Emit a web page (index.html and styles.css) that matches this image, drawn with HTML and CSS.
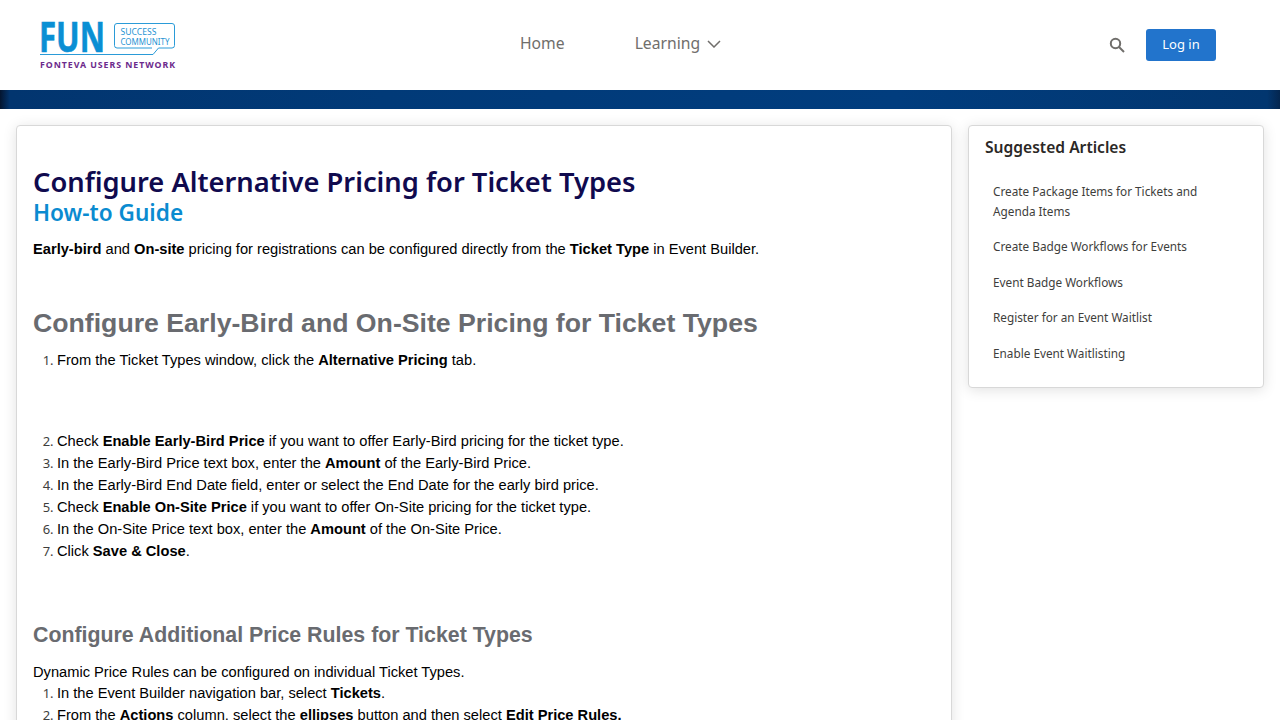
FILE: index.html
```html
<!DOCTYPE html>
<html lang="en">
  <head>
    <meta charset="UTF-8">
    <meta name="viewport" content="width=device-width, initial-scale=1.0">
    <title>Configure Alternative Pricing for Ticket Types</title>
    <link rel="stylesheet" href="styles.css">
  </head>
  <body>
    <header class="site-header">
      <a class="logo" href="#">
        <svg width="136" height="66" viewBox="0 -10 136 66">
          <text class="logo-fun" x="-1" y="29.500" textLength="66" lengthAdjust="spacingAndGlyphs">FUN</text>
          <path class="logo-line" d="M0 32.500H113L118.500 26H132a2.500 2.500 0 0 0 2.500-2.500V4A2.500 2.500 0 0 0 132 1.500H77A2.500 2.500 0 0 0 74.500 4V23.500A2.500 2.500 0 0 0 77 26H112"/>
          <text class="logo-small" x="80.500" y="13" textLength="36" lengthAdjust="spacingAndGlyphs">SUCCESS</text>
          <text class="logo-small" x="80.500" y="23" textLength="49" lengthAdjust="spacingAndGlyphs">COMMUNITY</text>
          <text class="logo-network" x="0" y="46" textLength="135">FONTEVA USERS NETWORK</text>
        </svg>
      </a>
      <nav class="main-nav">
        <a class="nav-link" href="#">Home</a>
        <a class="nav-link" href="#">Learning
          <svg class="chevron" width="14" height="8" viewBox="0 0 14 8"><path d="M1 1l6 6 6-6"/></svg>
        </a>
      </nav>
      <div class="header-actions">
        <svg class="search-icon" width="16" height="16" viewBox="0 0 16 16"><circle cx="6.500" cy="6.500" r="4.700"/><path d="M10 10l5 5"/></svg>
        <a class="login-btn" href="#">Log in</a>
      </div>
    </header>
    <div class="hero-band"></div>

    <main class="page-grid">
      <article class="card article">
        <h1 class="article-title">Configure Alternative Pricing for Ticket Types</h1>
        <h2 class="article-sub">How-to Guide</h2>
        <p class="intro"><b>Early-bird</b> and <b>On-site</b> pricing for registrations can be configured directly from the <b>Ticket Type</b> in Event Builder.</p>

        <h2 class="section-title">Configure Early-Bird and On-Site Pricing for Ticket Types</h2>
        <ol class="steps first-step">
          <li>From the Ticket Types window, click the <b>Alternative Pricing</b> tab.</li>
        </ol>
        <ol class="steps after-gap" start="2">
          <li>Check <b>Enable Early-Bird Price</b> if you want to offer Early-Bird pricing for the ticket type.</li>
          <li>In the Early-Bird Price text box, enter the <b>Amount</b> of the Early-Bird Price.</li>
          <li>In the Early-Bird End Date field, enter or select the End Date for the early bird price.</li>
          <li>Check <b>Enable On-Site Price</b> if you want to offer On-Site pricing for the ticket type.</li>
          <li>In the On-Site Price text box, enter the <b>Amount</b> of the On-Site Price.</li>
          <li>Click <b>Save &amp; Close</b>.</li>
        </ol>

        <h3 class="subsection-title">Configure Additional Price Rules for Ticket Types</h3>
        <p class="rules-intro">Dynamic Price Rules can be configured on individual Ticket Types.</p>
        <ol class="steps">
          <li>In the Event Builder navigation bar, select <b>Tickets</b>.</li>
          <li>From the <b>Actions</b> column, select the <b>ellipses</b> button and then select <b>Edit Price Rules.</b></li>
        </ol>
      </article>

      <aside class="card suggested">
        <h2 class="suggested-title">Suggested Articles</h2>
        <ul class="suggested-list">
          <li><a href="#">Create Package Items for Tickets and Agenda Items</a></li>
          <li><a href="#">Create Badge Workflows for Events</a></li>
          <li><a href="#">Event Badge Workflows</a></li>
          <li><a href="#">Register for an Event Waitlist</a></li>
          <li><a href="#">Enable Event Waitlisting</a></li>
        </ul>
      </aside>
    </main>
  </body>
</html>
```

FILE: styles.css
```css
:root {
  --ui-font: "Noto Sans", "Open Sans", sans-serif;
  --body-font: "Liberation Sans", Arial, sans-serif;
  --grey-heading: #696b70;
  --card-border: #d8d8d8;
}

html, body {
  height: 720px;
  overflow: hidden;
}

body {
  margin: 0;
  background: #fff;
  color: #000;
  font-family: var(--body-font);
}

a {
  color: inherit;
  text-decoration: none;
}

.site-header {
  display: grid;
  grid-template-columns: 480px 1fr auto;
  align-items: center;
  height: 90px;
  padding: 0 64px 0 40px;
  box-sizing: border-box;
}

.logo {
  display: block;
  height: 66px;
}

.logo-fun {
  font: 700 41px var(--ui-font);
  fill: #0a8fd4;
  stroke: #0a8fd4;
  stroke-width: 0.6;
}

.logo-line {
  fill: none;
  stroke: #2a9bd8;
  stroke-width: 1;
}

.logo-small {
  font: 9px var(--ui-font);
  fill: #1f93d3;
}

.logo-network {
  font: 700 8.800px var(--ui-font);
  fill: #6c2a8c;
}

.main-nav {
  display: flex;
  align-items: center;
  gap: 70px;
  margin-top: -4px;
}

.nav-link {
  font: 15.700px var(--ui-font);
  color: #706e6b;
  display: flex;
  align-items: center;
  gap: 7px;
}

.chevron {
  fill: none;
  stroke: #706e6b;
  stroke-width: 1.500;
  margin-top: 2px;
}

.header-actions {
  display: flex;
  align-items: center;
  gap: 21px;
}

.search-icon {
  fill: none;
  stroke: #706e6b;
  stroke-width: 2;
}

.login-btn {
  display: block;
  width: 70px;
  height: 32px;
  text-align: center;
  font: 13px/30px var(--ui-font);
  color: #fff;
  background: #2274cc;
  border-radius: 3px;
}

.hero-band {
  height: 19px;
  background: linear-gradient(90deg, #04152f 0, #02356f 10px, #013a78 30%, #013d7e 70%, #02366f 99%, #04264f 100%);
}

.page-grid {
  display: grid;
  grid-template-columns: 936px 296px;
  gap: 16px;
  align-items: start;
  padding: 16px 16px 0;
}

.card {
  background: #fff;
  border: 1px solid var(--card-border);
  border-radius: 4px;
  box-shadow: 0 2px 14px rgba(0, 0, 0, 0.12);
  box-sizing: border-box;
}

.article {
  padding: 36px 16px 40px;
  font-size: 14.670px;
  line-height: 22px;
}

.article-title {
  margin: 0;
  font: 600 27.300px/40px var(--ui-font);
  color: #100a4e;
}

.article-sub {
  margin: -1px 0 0;
  font: 600 22.600px/24px var(--ui-font);
  color: #0a8bd0;
}

.intro {
  margin: 13px 0 0;
}

.section-title {
  margin: 46px 0 0;
  font-size: 26.670px;
  line-height: 34px;
  color: var(--grey-heading);
}

.steps {
  margin: 9px 0 0;
  padding-left: 24px;
}

.steps li::marker {
  font: 13px var(--ui-font);
  color: #3e3e3c;
}

.after-gap {
  margin-top: 59px;
}

.subsection-title {
  margin: 59px 0 0;
  font-size: 21.330px;
  line-height: 28px;
  color: var(--grey-heading);
}

.rules-intro {
  margin: 12px 0 0;
}

.rules-intro + .steps {
  margin-top: -1px;
}

.suggested {
  padding: 8px 16px 16px;
  height: 263px;
}

.suggested-title {
  margin: 0;
  font: 600 15.600px/26px var(--ui-font);
  color: #2b2826;
}

.suggested-list {
  list-style: none;
  margin: 20.600px 0 0;
  padding: 0 8px;
  font: 11.770px/20px var(--ui-font);
  color: #3e3e3c;
}

.suggested-list li {
  margin-bottom: 15.500px;
}
```
